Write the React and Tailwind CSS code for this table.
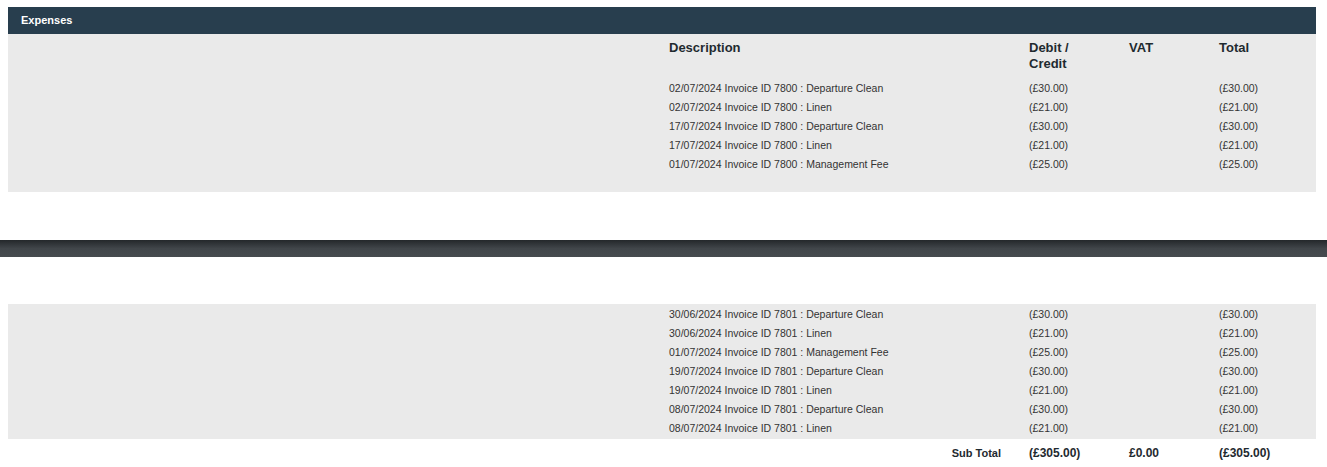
import React from 'react'

const first = [
  ['02/07/2024 Invoice ID 7800 : Departure Clean', '(£30.00)', '', '(£30.00)'],
  ['02/07/2024 Invoice ID 7800 : Linen', '(£21.00)', '', '(£21.00)'],
  ['17/07/2024 Invoice ID 7800 : Departure Clean', '(£30.00)', '', '(£30.00)'],
  ['17/07/2024 Invoice ID 7800 : Linen', '(£21.00)', '', '(£21.00)'],
  ['01/07/2024 Invoice ID 7800 : Management Fee', '(£25.00)', '', '(£25.00)'],
]

const second = [
  ['30/06/2024 Invoice ID 7801 : Departure Clean', '(£30.00)', '', '(£30.00)'],
  ['30/06/2024 Invoice ID 7801 : Linen', '(£21.00)', '', '(£21.00)'],
  ['01/07/2024 Invoice ID 7801 : Management Fee', '(£25.00)', '', '(£25.00)'],
  ['19/07/2024 Invoice ID 7801 : Departure Clean', '(£30.00)', '', '(£30.00)'],
  ['19/07/2024 Invoice ID 7801 : Linen', '(£21.00)', '', '(£21.00)'],
  ['08/07/2024 Invoice ID 7801 : Departure Clean', '(£30.00)', '', '(£30.00)'],
  ['08/07/2024 Invoice ID 7801 : Linen', '(£21.00)', '', '(£21.00)'],
]

function Row({ row }) {
  return (
    <div className="flex h-[19px] items-center text-[10.5px] text-[#333]">
      <div className="w-[360px]">{row[0]}</div>
      <div className="w-[100px]">{row[1]}</div>
      <div className="w-[90px]">{row[2]}</div>
      <div className="flex-1">{row[3]}</div>
    </div>
  )
}

function App() {
  return (
    <div className="w-[1327px] bg-white pt-[7px] font-['Liberation_Sans',Arial,sans-serif]">
      <div className="mx-[8px] w-[1308px]">
        {/* Expenses header */}
        <div className="flex h-[27px] items-center bg-[#283e4e] px-[13px] text-[11px] font-bold text-white">
          Expenses
        </div>
        <div className="flex bg-[#eaeaea] pt-[6px] pb-[18px]">
          <div className="w-[661px]"></div>
          <div className="flex-1">
            <div className="flex text-[13px] font-bold leading-[16px] text-[#1f2a30]">
              <div className="w-[360px]">Description</div>
              <div className="w-[100px]">Debit /<br />Credit</div>
              <div className="w-[90px]">VAT</div>
              <div className="flex-1">Total</div>
            </div>
            <div className="mt-[7px]">
              {first.map((r, i) => <Row key={i} row={r} />)}
            </div>
          </div>
        </div>
      </div>

      <div className="mt-[48px] h-[17px] w-full bg-gradient-to-b from-[#24282b] via-[#41464a] to-[#464b4f]"></div>

      <div className="mx-[8px] mt-[47px] w-[1308px]">
        <div className="flex bg-[#eaeaea] py-[1px]">
          <div className="w-[661px]"></div>
          <div className="flex-1">
            {second.map((r, i) => <Row key={i} row={r} />)}
          </div>
        </div>
        <div className="flex h-[28px] items-center font-bold text-[#1f2a30]">
          <div className="w-[661px]"></div>
          <div className="w-[360px] pr-[28px] text-right text-[11px]">Sub Total</div>
          <div className="w-[100px] text-[12px]">(£305.00)</div>
          <div className="w-[90px] text-[12px]">£0.00</div>
          <div className="flex-1 text-[12px]">(£305.00)</div>
        </div>
      </div>
    </div>
  )
}

export default App
